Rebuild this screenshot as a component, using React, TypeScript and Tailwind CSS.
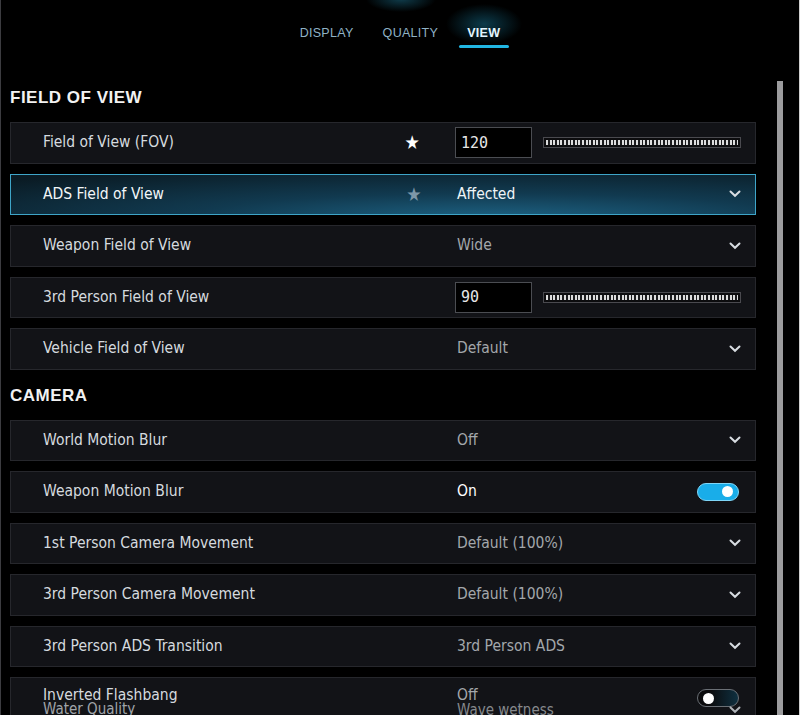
import type { ReactNode } from "react";

type Row =
  | { kind: "slider"; label: string; value: string; star?: "on" | "dim" }
  | { kind: "select"; label: string; value: string; star?: "on" | "dim"; active?: boolean }
  | { kind: "toggle"; label: string; value: string; on: boolean };

const fieldOfView: Row[] = [
  { kind: "slider", label: "Field of View (FOV)", value: "120", star: "on" },
  { kind: "select", label: "ADS Field of View", value: "Affected", star: "dim", active: true },
  { kind: "select", label: "Weapon Field of View", value: "Wide" },
  { kind: "slider", label: "3rd Person Field of View", value: "90" },
  { kind: "select", label: "Vehicle Field of View", value: "Default" },
];

const camera: Row[] = [
  { kind: "select", label: "World Motion Blur", value: "Off" },
  { kind: "toggle", label: "Weapon Motion Blur", value: "On", on: true },
  { kind: "select", label: "1st Person Camera Movement", value: "Default (100%)" },
  { kind: "select", label: "3rd Person Camera Movement", value: "Default (100%)" },
  { kind: "select", label: "3rd Person ADS Transition", value: "3rd Person ADS" },
];

const condensed = "font-['Liberation_Sans_Narrow','DejaVu_Sans_Condensed',sans-serif]";

function Chevron() {
  return (
    <svg width="12" height="8" viewBox="0 0 12 8" className="text-[#d8dde2]">
      <path d="M1.5 1.5 L6 5.8 L10.5 1.5" fill="none" stroke="currentColor" strokeWidth="2" strokeLinecap="round" />
    </svg>
  );
}

function Slider() {
  return (
    <div className="ml-[11px] flex h-[11px] w-[198px] items-center border border-[#4a4a4f] bg-[#0c0c0e] px-[2px]">
      <div className="h-[5px] w-full bg-[repeating-linear-gradient(90deg,#dcdcdc_0px,#dcdcdc_2px,#1a1a1c_2px,#1a1a1c_3.6px)]" />
    </div>
  );
}

function Toggle({ on }: { on: boolean }) {
  return on ? (
    <div className="flex h-[18px] w-[42px] items-center justify-end rounded-full border border-[#7fd6f7] bg-[#19ade9] pr-[5px]">
      <div className="h-[11px] w-[11px] rounded-full bg-white" />
    </div>
  ) : (
    <div className="flex h-[18px] w-[42px] items-center rounded-full border border-[#6a6f75] bg-[linear-gradient(90deg,#0b0b0d_30%,#0f3040_100%)] pl-[5px]">
      <div className="h-[11px] w-[11px] rounded-full bg-white" />
    </div>
  );
}

function Star({ mode }: { mode?: "on" | "dim" }) {
  if (!mode) return null;
  return (
    <span className={`text-[19px] leading-none ${mode === "on" ? "text-white" : "text-[#7d97a8]"}`}>★</span>
  );
}

function SettingRow({ row }: { row: Row }) {
  const active = row.kind === "select" && row.active;
  const star = row.kind === "toggle" ? undefined : row.star;

  let control: ReactNode;
  if (row.kind === "slider") {
    control = (
      <>
        <div className="flex h-[31px] w-[77px] items-center border border-[#4b4d52] bg-black pl-[5px] font-['DejaVu_Sans_Mono',monospace] text-[15px] text-[#e6e6e6]">
          {row.value}
        </div>
        <Slider />
      </>
    );
  } else if (row.kind === "select") {
    control = (
      <>
        <span className={`flex-1 text-[15.5px] ${active ? "text-[#eef4f7]" : "text-[#a3a7ab]"}`}>{row.value}</span>
        <Chevron />
      </>
    );
  } else {
    control = (
      <>
        <span className={`flex-1 text-[15.5px] ${row.on ? "text-white" : "text-[#a3a7ab]"}`}>{row.value}</span>
        <Toggle on={row.on} />
      </>
    );
  }

  return (
    <div
      className={`flex h-[41.5px] shrink-0 items-center border pl-[32px] ${row.kind === "toggle" ? "pr-[16px]" : "pr-[14px]"} ${
        active
          ? "border-[#3ea5c8] bg-[radial-gradient(ellipse_90%_140%_at_65%_110%,#1d6283_0%,#113a50_45%,#0a1b24_100%)]"
          : "border-[#26272c] bg-[#121317]"
      }`}
    >
      <span className={`w-[361px] text-[15.5px] ${active ? "text-[#f2f6f8]" : "text-[#d5dadf]"}`}>{row.label}</span>
      <div className="flex w-[20px] justify-center">
        <Star mode={star} />
      </div>
      <div className="ml-[33px] flex flex-1 items-center">{control}</div>
    </div>
  );
}

function SectionTitle({ children }: { children: ReactNode }) {
  return (
    <div className="flex h-[30px] shrink-0 items-center pt-[2px] font-['Liberation_Sans',sans-serif] text-[17px] font-bold tracking-[0.5px] text-[#f2f2f2]">
      {children}
    </div>
  );
}

function Tabs() {
  const tabs = ["DISPLAY", "QUALITY", "VIEW"];
  return (
    <div className="relative flex h-[81px] shrink-0 justify-center pt-[24px]">
      {/* glows from the header bar above */}
      <div className="absolute left-[365px] top-[-14px] h-[26px] w-[70px] rounded-full bg-[radial-gradient(closest-side,rgba(30,120,150,0.5),transparent)]" />
      <div className="absolute left-[445px] top-[4px] h-[40px] w-[76px] rounded-full bg-[radial-gradient(closest-side,rgba(25,130,165,0.45),transparent)]" />
      <div className="relative flex gap-[29px] font-['Liberation_Sans',sans-serif] text-[12.5px] tracking-[0.3px]">
        {tabs.map((t) => (
          <div key={t} className="relative flex flex-col items-center">
            <span className={t === "VIEW" ? "font-bold text-[#e4f6ff]" : "text-[#8fb2c6]"}>{t}</span>
            {t === "VIEW" && (
              <div className="absolute left-1/2 top-[21px] h-[3px] w-[50px] -translate-x-1/2 rounded-full bg-[#21b6e2]" />
            )}
          </div>
        ))}
      </div>
    </div>
  );
}

export default function App() {
  return (
    <div className={`flex h-[715px] w-[800px] flex-col overflow-hidden border-x border-l-[#3c3c40] border-r-[#d0d0d0] bg-black ${condensed}`}>
      <Tabs />
      <div className="flex flex-1 overflow-hidden">
        <div className="flex w-[755px] shrink-0 flex-col gap-[10px] pl-[9px] pt-[1px]">
          <SectionTitle>FIELD OF VIEW</SectionTitle>
          {fieldOfView.map((r) => (
            <SettingRow key={r.label} row={r} />
          ))}
          <SectionTitle>CAMERA</SectionTitle>
          {camera.map((r) => (
            <SettingRow key={r.label} row={r} />
          ))}
          {/* row caught mid-scroll: the next item's text bleeds through */}
          <div className="relative flex h-[42px] shrink-0 items-center border border-[#26272c] bg-[#121317] pl-[32px] pr-[16px]">
            <span className="mt-[-4px] w-[361px] text-[15.5px] text-[#d5dadf]">Inverted Flashbang</span>
            <div className="w-[20px]" />
            <div className="ml-[33px] flex flex-1 items-center">
              <span className="mt-[-4px] flex-1 text-[15.5px] text-[#a3a7ab]">Off</span>
              <Toggle on={false} />
            </div>
            <span className="absolute left-[32px] top-[20px] text-[15px] text-[#c4c9ce] opacity-80">Water Quality</span>
            <span className="absolute left-[446px] top-[21px] text-[15px] text-[#a3a7ab] opacity-80">Wave wetness</span>
            <div className="absolute right-[14px] top-[28px] opacity-80">
              <Chevron />
            </div>
          </div>
        </div>
        <div className="ml-[21px] w-[6px] bg-[#9c9c9e]" />
      </div>
    </div>
  );
}
